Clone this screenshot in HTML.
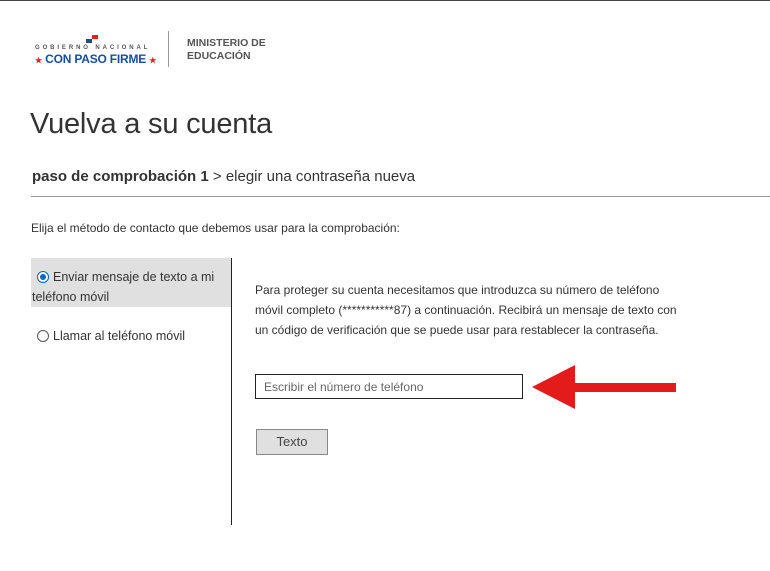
<!DOCTYPE html>
<html><head><meta charset="utf-8"><style>
body{margin:0;width:770px;height:571px;background:#fff;font-family:"Liberation Sans",sans-serif;position:relative;overflow:hidden;color:#333}
.a{position:absolute;white-space:nowrap}
</style></head><body>
<div class="a" style="left:0;top:0;width:770px;height:1px;background:#444"></div>
<div class="a" style="left:87px;top:35px;width:5px;height:4px;background:#fff"></div>
<div class="a" style="left:92px;top:35px;width:6px;height:4px;background:#d22"></div>
<div class="a" style="left:86px;top:39px;width:6px;height:4px;background:#1a4c9c"></div>
<div class="a" style="left:35px;top:45px;font-size:6px;letter-spacing:2.9px;color:#555;font-weight:bold">GOBIERNO NACIONAL</div>
<div class="a" style="left:35px;top:52px;font-size:12px;font-weight:bold;color:#1a4c9c;letter-spacing:-0.2px"><span style="color:#d22;font-size:8px">★</span> CON PASO FIRME <span style="color:#d22;font-size:8px">★</span></div>
<div class="a" style="left:168px;top:31px;width:1px;height:36px;background:#999"></div>
<div class="a" style="left:187px;top:37px;font-size:10.5px;font-weight:bold;color:#555;line-height:13px">MINISTERIO DE<br>EDUCACIÓN</div>
<div class="a" style="left:30px;top:108px;font-size:29px;color:#333;letter-spacing:-0.2px">Vuelva a su cuenta</div>
<div class="a" style="left:32px;top:168px;font-size:15px;color:#333"><b>paso de comprobación 1</b> &gt; elegir una contraseña nueva</div>
<div class="a" style="left:31px;top:196px;width:739px;height:1px;background:#999"></div>
<div class="a" style="left:31px;top:221px;font-size:12px;color:#333">Elija el método de contacto que debemos usar para la comprobación:</div>
<div class="a" style="left:31px;top:258px;width:200px;height:49px;background:#e0e0e0"></div>
<div class="a" style="left:231px;top:258px;width:1px;height:267px;background:#222"></div>
<div class="a" style="left:37px;top:271px;width:12px;height:12px;border-radius:50%;border:1px solid #0067c5;box-sizing:border-box;background:#fff"></div>
<div class="a" style="left:40px;top:274px;width:6px;height:6px;border-radius:50%;background:#0067c5"></div>
<div class="a" style="left:53px;top:270px;font-size:12.5px;color:#333">Enviar mensaje de texto a mi</div>
<div class="a" style="left:32px;top:290px;font-size:12.5px;color:#333">teléfono móvil</div>
<div class="a" style="left:37px;top:330px;width:12px;height:12px;border-radius:50%;border:1px solid #555;box-sizing:border-box"></div>
<div class="a" style="left:53px;top:329px;font-size:12.5px;color:#333">Llamar al teléfono móvil</div>
<div class="a" style="left:255px;top:280px;font-size:12px;line-height:20px;color:#333">Para proteger su cuenta necesitamos que introduzca su número de teléfono<br>móvil completo (***********87) a continuación. Recibirá un mensaje de texto con<br>un código de verificación que se puede usar para restablecer la contraseña.</div>
<div class="a" style="left:255px;top:374px;width:268px;height:25px;border:1px solid #222;box-sizing:border-box"></div>
<div class="a" style="left:264px;top:380px;font-size:12px;color:#666">Escribir el número de teléfono</div>
<div class="a" style="left:256px;top:429px;width:72px;height:26px;background:#e0e0e0;border:1px solid #888;box-sizing:border-box;text-align:center;font-size:13px;line-height:24px;color:#444">Texto</div>
<svg class="a" style="left:530px;top:363px" width="148" height="50"><polygon points="2,24 45,2 45,20 146,20 146,29 45,29 45,46" fill="#e41b1b"/></svg>
</body></html>
